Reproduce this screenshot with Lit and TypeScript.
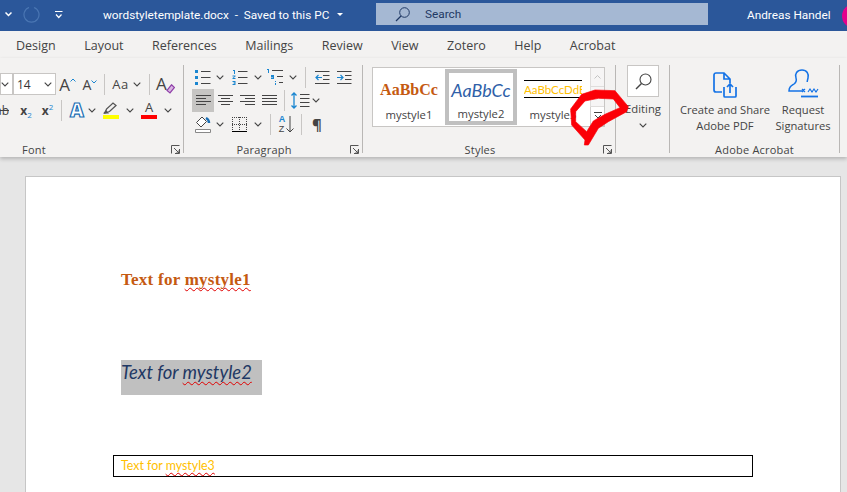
import { LitElement, css, html, svg } from "lit";
import { customElement } from "lit/decorators.js";

const chev = html`<svg class="chev" width="8" height="5" viewBox="0 0 8 5"><path d="M.7.7 4 4 7.3.7" fill="none" stroke="#444" stroke-width="1.1"/></svg>`;
const vline = html`<i class="vline"></i>`;
const launcher = html`<svg width="9" height="9" viewBox="0 0 9 9"><path d="M.5 8.5V.5h8M8.5 4v4.500H4M3 3l5 5M5.200 8h2.800V5.200" fill="none" stroke="#555"/></svg>`;

const lines = (rows: number[][]) =>
  rows.map((r) => svg`<path d="M${r[0]} ${r[2]}H${r[1]}"/>`);

const align = (rows: number[][]) => html`<svg width="15" height="14" viewBox="0 0 15 14" fill="none" stroke="#444">${lines(rows)}</svg>`;

const bullets = html`<svg width="16" height="15" viewBox="0 0 16 15"><path d="M0 0h3v3H0zM0 6h3v3H0zM0 12h3v3H0z" fill="#1a86d0"/><path d="M6 1.500h9.500M6 7.500h9.500M6 13.500h9.500" stroke="#444"/></svg>`;
const numbers = html`<svg width="16" height="15" viewBox="0 0 16 15"><path d="M1 0h2v4H2V1H1zM.5 5.500h3v1l-2 1.500h2v1h-3V8l2-1.500h-2zM.5 11h3v4h-3v-1h2v-.5h-1v-1h1V12h-2z" fill="#1a86d0"/><path d="M6 1.500h9.500M6 7.500h9.500M6 13.500h9.500" stroke="#444"/></svg>`;
const multilevel = html`<svg width="18" height="16" viewBox="0 0 18 16"><path d="M1 0h2v4H2V1H1zM5 6h3v4H5V9h2v-.5H5zM9 12h1v1H9zM9 14h1v2H9z" fill="#1a86d0"/><path d="M6 1.500h11M11 7.500h6M13 13.500h4" stroke="#444"/></svg>`;
const indentOut = html`<svg width="15" height="13" viewBox="0 0 15 13" fill="none"><path d="M0 .5h14.500M8 4.500h6.500M8 8.500h6.500M0 12.500h14.500" stroke="#444"/><path d="M7 6.500H1M3.500 4 1 6.500 3.500 9" stroke="#1a86d0" stroke-width="1.200"/></svg>`;
const indentIn = html`<svg width="15" height="13" viewBox="0 0 15 13" fill="none"><path d="M0 .5h14.500M8 4.500h6.500M8 8.500h6.500M0 12.500h14.500" stroke="#444"/><path d="M0 6.500h6M3.500 4 6 6.500 3.500 9" stroke="#1a86d0" stroke-width="1.200"/></svg>`;
const spacing = html`<svg width="19" height="17" viewBox="0 0 19 17" fill="none"><path d="M3 1v15M.5 3.500 3 1l2.500 2.500M.5 13.500 3 16l2.500-2.500" stroke="#1a86d0" stroke-width="1.300"/><path d="M9 2.500h9.500M9 6.500h9.500M9 10.500h9.500M9 14.500h9.500" stroke="#444"/></svg>`;
const shading = html`<svg width="16" height="17" viewBox="0 0 16 17" fill="none"><path d="M7 1 1.500 6.500 6 11l5.500-5.500z" stroke="#444" fill="#fff"/><path d="M11 2c2 1 3 3 3 5" stroke="#1a6fb5" stroke-width="2.500"/><path d="M.5 13.500h15v3H.5z" fill="#fff" stroke="#888"/></svg>`;
const borders = html`<svg width="15" height="15" viewBox="0 0 15 15" fill="none"><path d="M0 .5h15M0 7.500h15M.5 0v14M7.500 0v14M14.500 0v14" stroke="#444" stroke-dasharray="1 1"/><path d="M0 14.500h15" stroke="#000"/></svg>`;
const erase = html`<svg class="over" width="9" height="10" viewBox="0 0 9 10"><path d="M5.500.8 8.500 3.500 4 9 1 6.500z" fill="#d9b6e2" stroke="#8f3fa8" stroke-width="1.200"/></svg>`;
const pen = html`<svg width="16" height="12" viewBox="0 0 16 12"><path d="M2 11 3.500 7 10 1l3 2.500-6.500 6z" fill="#f3f2f1" stroke="#555" stroke-width="1.300"/><path d="M0 11.500h6L3 8z" fill="#555"/></svg>`;
const lens = html`<svg width="17" height="17" viewBox="0 0 17 17" fill="none" stroke="#444" stroke-width="1.100"><circle cx="10.500" cy="6.500" r="5.500"/><path d="M6.500 10.500 1 16" stroke-width="1.500"/></svg>`;
const pdf = html`<svg width="25" height="26" viewBox="0 0 25 26" fill="none" stroke="#1473e6" stroke-width="1.700"><path d="M9 20H3a2 2 0 0 1-2-2V3a2 2 0 0 1 2-2h8l6 6v4M11 1v6h6"/><path d="M11 15v9a1 1 0 0 0 1 1h10a1 1 0 0 0 1-1v-9M17 21v-9M14 15l3-3 3 3"/></svg>`;
const sign = html`<svg width="32" height="29" viewBox="0 0 32 29" fill="none" stroke="#1473e6" stroke-width="1.500"><path d="M16 22H2c0-4 2-5 5-7 2-1.500 3-3 2-6-1.500-4 1-8 6-8s7 4 6 8c-.4 1.500-.8 3-.8 4"/><path d="M15 20l3 3m0-3-3 3M21 23l2-3 2 3 2-3 2 3 2-3" stroke-width="1.200"/><path d="M14 27.500h17" stroke-width="1.800"/></svg>`;

@customElement("app-root")
export class AppRoot extends LitElement {
  public static styles = css`
    :host {
      display: block;
      position: relative;
      width: 847px;
      height: 492px;
      overflow: hidden;
      background: #e6e6e6;
      font-family: "Open Sans", "Liberation Sans", sans-serif;
      color: #444;
    }

    svg {
      display: block;
      flex: none;
    }

    .titlebar {
      display: flex;
      align-items: center;
      height: 31px;
      background: #2b579a;
      color: #fff;
      font-family: Roboto, "Open Sans", sans-serif;
      font-size: 11.800px;
      overflow: hidden;
    }

    .qat-chev {
      margin: -2px 0 0 5px;
    }

    .redo {
      margin: -2px 0 0 11px;
    }

    .qat {
      margin: -2px 0 0 15px;
    }

    .doc-name {
      flex: none;
      width: 230px;
      margin: -2px 0 0 40px;
      white-space: pre;
    }

    .doc-caret {
      flex: none;
      margin: -2px 0 0 4px;
      border: 3px solid transparent;
      border-top: 3px solid #fff;
      border-bottom: 0;
    }

    .search {
      flex: none;
      display: flex;
      align-items: center;
      width: 332px;
      height: 22px;
      margin: -3px 0 0 33px;
      background: #a5b8d3;
      color: #1f3864;
      box-sizing: border-box;
      padding-left: 19px;
    }

    .search span {
      margin-left: 15px;
    }

    .user {
      flex: none;
      width: 84px;
      margin: -2px 0 0 39px;
      white-space: nowrap;
    }

    .avatar {
      flex: none;
      width: 24px;
      height: 24px;
      margin-left: 11px;
      border-radius: 50%;
      background: #e3008c;
    }

    .tabs {
      display: flex;
      gap: 28.500px;
      height: 27px;
      padding: 6px 0 0 16px;
      box-sizing: border-box;
      background: #f3f2f1;
      font-size: 12.500px;
      line-height: 18px;
      color: #444;
    }

    .ribbon {
      display: flex;
      height: 99px;
      padding-top: 7px;
      box-sizing: border-box;
      background: #f3f2f1;
      box-shadow: 0 2px 4px rgba(0, 0, 0, 0.22);
    }

    .sep {
      flex: none;
      width: 1px;
      height: 88px;
      background: #b9b7b5;
    }

    .group {
      flex: none;
      display: flex;
      flex-direction: column;
      height: 92px;
      box-sizing: border-box;
    }

    .font {
      width: 183px;
      padding-top: 8px;
    }

    .para {
      width: 178px;
    }

    .styles {
      width: 252px;
    }

    .editing {
      width: 53px;
      align-items: center;
    }

    .acrobat {
      width: 169px;
    }

    .label {
      display: flex;
      align-items: center;
      height: 16px;
      margin-top: auto;
      font-size: 11px;
      letter-spacing: 0.2px;
    }

    .label span {
      flex: 1;
      text-align: center;
    }

    .label b {
      flex: none;
      width: 18px;
      font-weight: 400;
    }

    .label b svg {
      margin-left: 6px;
    }

    .font .label span {
      text-align: left;
      padding-left: 22px;
    }

    .row {
      display: grid;
      align-items: center;
      justify-items: center;
    }

    .font .r1 {
      height: 22px;
      grid-template-columns: 13px 43px 23px 22px 6px 39px 6px 26px;
    }

    .font .r2 {
      height: 22px;
      margin-top: 4px;
      grid-template-columns: 15px 22px 21px 7px 24px 6px 31px 8px 30px 7px;
    }

    .para .row {
      padding-left: 8px;
    }

    .para .r1 {
      height: 24px;
      grid-template-columns: 22px 12px 27px 9px 26px 9px 16px 18px 26px;
    }

    .para .r2 {
      height: 23px;
      grid-template-columns: 22px 22px 22px 22px 8px 24px 8px;
    }

    .para .r3 {
      height: 24px;
      grid-template-columns: 22px 12px 27px 9px 16px 17px 12px 20px;
    }

    .vline {
      display: block;
      width: 1px;
      height: 21px;
      background: #c8c6c4;
    }

    .combo {
      display: flex;
      align-items: center;
      justify-content: flex-end;
      height: 22px;
      box-sizing: border-box;
      justify-self: stretch;
      background: #fff;
      border: 1px solid #c8c6c4;
      padding-right: 3px;
      font-size: 12px;
      color: #333;
    }

    .combo span {
      flex: 1;
      padding-left: 3px;
    }

    .glyph {
      display: flex;
      align-items: flex-start;
      line-height: 1;
      color: #444;
      position: relative;
    }

    .up,
    .down {
      width: 6px;
      height: 4px;
      margin-top: 2px;
    }

    .big {
      font-size: 17px;
    }

    .mid {
      font-size: 14px;
      margin-top: 2px;
    }

    .case {
      display: flex;
      align-items: center;
      gap: 4px;
      font-size: 13px;
      letter-spacing: 0.5px;
    }

    .clear {
      font-size: 17px;
      position: relative;
      width: 18px;
      line-height: 20px;
    }

    .over {
      position: absolute;
      right: -1px;
      bottom: 0;
    }

    .strike {
      justify-self: start;
      width: 9px;
      overflow: hidden;
      direction: rtl;
      font-size: 12px;
      text-decoration: line-through;
    }

    .sub {
      font-size: 12px;
      font-weight: 700;
      color: #444;
      white-space: nowrap;
    }

    .sub sub,
    .sub sup {
      font-size: 8px;
      font-weight: 400;
      color: #1a86d0;
      line-height: 0;
    }

    .fx {
      font-size: 19px;
      font-weight: 800;
      line-height: 20px;
      color: #fff;
      -webkit-text-stroke: 1.200px #1a6fb5;
    }

    .stacked {
      display: flex;
      flex-direction: column;
      align-items: center;
      width: 16px;
      line-height: 13px;
      font-size: 13px;
    }

    .stacked i {
      display: block;
      width: 16px;
      height: 4px;
      margin-top: 1px;
    }

    .yellow {
      background: #ffff00;
    }

    .red {
      background: #ff0000;
    }

    .sort {
      display: flex;
      align-items: center;
      gap: 1px;
      font: 9px/10.500px "Liberation Sans", sans-serif;
    }

    .sort div :first-child {
      color: #1a86d0;
      font-weight: 700;
    }

    .sort span {
      display: block;
    }

    .pilcrow {
      font-size: 15px;
      font-weight: 700;
      line-height: 18px;
    }

    .on {
      background: #c6c5c3;
      justify-self: stretch;
      align-self: stretch;
      display: flex;
      align-items: center;
      justify-content: center;
    }

    .gallery {
      display: flex;
      height: 60px;
      width: 233px;
      margin: 2px 0 0 9px;
      box-sizing: border-box;
      background: #fff;
      border: 1px solid #c8c6c4;
    }

    .style {
      flex: none;
      width: 72px;
      height: 56px;
      margin-top: 1px;
      box-sizing: border-box;
      display: flex;
      flex-direction: column;
      align-items: center;
      overflow: hidden;
      font-size: 11.300px;
      border: 3px solid transparent;
    }

    .style.sel {
      border: 4px solid #c0c0c0;
    }

    .sample {
      display: flex;
      align-items: center;
      height: 35px;
      margin-top: 1px;
      white-space: nowrap;
    }

    .sel .sample {
      height: 34px;
      margin-top: 0;
    }

    .s1 {
      font: 700 16px "Liberation Serif", serif;
      color: #c55a11;
    }

    .s2 {
      font: italic 18px Lato, sans-serif;
      color: #2f5fa8;
    }

    .s3 {
      font: 11.500px Lato, sans-serif;
      color: #ffc000;
      height: 17px;
      margin: 8px 0 9px;
      width: 58px;
      justify-content: flex-start;
      overflow: hidden;
      border-top: 1px solid #000;
      border-bottom: 1px solid #000;
    }

    .scroll {
      flex: none;
      display: flex;
      flex-direction: column;
      width: 14px;
      margin-left: 1px;
    }

    .scroll div {
      flex: 1;
      display: flex;
      flex-direction: column;
      align-items: center;
      justify-content: center;
      border-left: 1px solid #d2d0ce;
      border-bottom: 1px solid #d2d0ce;
    }

    .scroll .idle {
      background: #f3f2f1;
      opacity: 0.7;
    }

    .find {
      display: flex;
      align-items: center;
      justify-content: center;
      width: 32px;
      height: 32px;
      box-sizing: border-box;
      background: #fff;
      border: 1px solid #c8c6c4;
      margin-left: 1px;
    }

    .edit-text {
      margin: 4px 0 0 1px;
      font-size: 11.300px;
      line-height: 16px;
    }

    .edit-chev {
      margin-top: 6px;
    }

    .acts {
      display: flex;
      padding-left: 1px;
    }

    .act {
      display: flex;
      flex-direction: column;
      align-items: center;
      font-size: 11.200px;
      line-height: 16px;
      text-align: center;
      white-space: nowrap;
    }

    .act.a {
      width: 108px;
    }

    .act.b {
      width: 46px;
      margin-left: 1px;
    }

    .act .ic {
      display: flex;
      align-items: flex-end;
      justify-content: center;
      height: 33px;
      margin-bottom: 4px;
    }

    .canvas {
      padding: 19px 0 0 25px;
    }

    .page {
      width: 816px;
      height: 400px;
      box-sizing: border-box;
      background: #fff;
      border: 1px solid #c6c6c6;
      padding: 92px 0 0 95px;
    }

    .spell {
      text-decoration: underline wavy #e00000 1px;
      text-decoration-skip-ink: none;
      text-underline-offset: 2px;
    }

    .p1 {
      height: 22px;
      font: 700 17px/22px "Liberation Serif", serif;
      letter-spacing: 0.25px;
      color: #c55a11;
    }

    .p2 {
      width: 141px;
      height: 35px;
      margin-top: 69px;
      background: #c0c0c0;
      font: italic 18.400px/24px Lato, sans-serif;
      color: #1f3864;
      white-space: nowrap;
    }

    .p3 {
      width: 640px;
      height: 22px;
      margin: 60px 0 0 -8px;
      box-sizing: border-box;
      border: 1px solid #000;
      padding: 1px 0 0 7px;
      font: 12.400px/18px Lato, sans-serif;
      color: #ffc000;
    }

    .scribble {
      position: absolute;
      left: 0;
      top: 0;
      pointer-events: none;
    }
  `;

  private renderTitle() {
    return html`<div class="titlebar">
      <svg class="qat-chev" width="7" height="5" viewBox="0 0 7 5"><path d="M.5.5 3.500 3.500 6.500.5" fill="none" stroke="#fff" stroke-width="1.500"/></svg>
      <svg class="redo" width="17" height="17" viewBox="0 0 17 17"><path d="M6 1.500a7.500 7.500 0 1 0 5 0M6 1.500 3 3" fill="none" stroke="#4a76b3" stroke-width="1.200"/></svg>
      <svg class="qat" width="8" height="8" viewBox="0 0 8 8"><path d="M0 .5h7.500M1 3.500 3.750 6.500 6.500 3.500" fill="none" stroke="#fff" stroke-width="1.200"/></svg>
      <span class="doc-name">wordstyletemplate.docx  -  Saved to this PC</span>
      <i class="doc-caret"></i>
      <div class="search">
        <svg width="15" height="15" viewBox="0 0 15 15" fill="none" stroke="#1f3864"><circle cx="9.500" cy="5.500" r="4.800"/><path d="M6 9 1 14" stroke-width="1.300"/></svg>
        <span>Search</span>
      </div>
      <span class="user">Andreas Handel</span>
      <i class="avatar"></i>
    </div>`;
  }

  private renderFont() {
    return html`<div class="group font">
      <div class="row r1">
        <div class="combo">${chev}</div>
        <div class="combo"><span>14</span>${chev}</div>
        <div class="glyph big">A<svg class="up" viewBox="0 0 6 4"><path d="M.5 3.500 3 1l2.500 2.500" fill="none" stroke="#1a86d0"/></svg></div>
        <div class="glyph mid">A<svg class="down" viewBox="0 0 6 4"><path d="M.5.500 3 3 5.500.5" fill="none" stroke="#1a86d0"/></svg></div>
        ${vline}
        <div class="case">Aa ${chev}</div>
        ${vline}
        <div class="clear">A${erase}</div>
      </div>
      <div class="row r2">
        <div class="strike">ab</div>
        <div class="sub">x<sub>2</sub></div>
        <div class="sub">x<sup>2</sup></div>
        ${vline}
        <div class="fx">A</div>
        ${chev}
        <div class="stacked">${pen}<i class="yellow"></i></div>
        ${chev}
        <div class="stacked">A<i class="red"></i></div>
        ${chev}
      </div>
      <div class="label"><span>Font</span><b>${launcher}</b></div>
    </div>`;
  }

  private renderParagraph() {
    return html`<div class="group para">
      <div class="row r1">
        ${bullets}${chev}${numbers}${chev}${multilevel}${chev}${vline}${indentOut}${indentIn}
      </div>
      <div class="row r2">
        <div class="on">${align([[0, 15, 1.5], [0, 10, 4.5], [0, 15, 7.5], [0, 10, 10.5]])}</div>
        ${align([[0, 15, 1.5], [3, 12, 4.5], [0, 15, 7.5], [3, 12, 10.5]])}
        ${align([[0, 15, 1.5], [5, 15, 4.5], [0, 15, 7.5], [5, 15, 10.5]])}
        ${align([[0, 15, 1.5], [0, 15, 4.5], [0, 15, 7.5], [0, 15, 10.5]])}
        ${vline}${spacing}${chev}
      </div>
      <div class="row r3">
        ${shading}${chev}${borders}${chev}${vline}
        <div class="sort">
          <div><span>A</span><span>Z</span></div>
          <svg width="8" height="17" viewBox="0 0 8 17"><path d="M4 0v16M.5 12.500 4 16l3.500-3.500" fill="none" stroke="#444"/></svg>
        </div>
        ${vline}
        <div class="pilcrow">¶</div>
      </div>
      <div class="label"><span>Paragraph</span><b>${launcher}</b></div>
    </div>`;
  }

  private renderStyles() {
    return html`<div class="group styles">
      <div class="gallery">
        <div class="style"><div class="sample s1">AaBbCc</div>mystyle1</div>
        <div class="style sel"><div class="sample s2">AaBbCc</div>mystyle2</div>
        <div class="style"><div class="sample s3">AaBbCcDdE</div>mystyle3</div>
        <div class="scroll">
          <div class="idle"><svg width="7" height="4" viewBox="0 0 7 4"><path d="M.5 3.500 3.500.5l3 3" fill="none" stroke="#aaa"/></svg></div>
          <div class="idle"></div>
          <div>
            <svg width="8" height="7" viewBox="0 0 8 7"><path d="M0 .5h8M1 3l3 3 3-3" fill="none" stroke="#444"/></svg>
          </div>
        </div>
      </div>
      <div class="label"><span>Styles</span><b>${launcher}</b></div>
    </div>`;
  }

  private renderEditing() {
    return html`<div class="group editing">
      <div class="find">${lens}</div>
      <div class="edit-text">Editing</div>
      <div class="edit-chev">${chev}</div>
    </div>`;
  }

  private renderAcrobat() {
    return html`<div class="group acrobat">
      <div class="acts">
        <div class="act a"><div class="ic">${pdf}</div>Create and Share<br />Adobe PDF</div>
        <div class="act b"><div class="ic">${sign}</div>Request<br />Signatures</div>
      </div>
      <div class="label"><span>Adobe Acrobat</span></div>
    </div>`;
  }

  public render() {
    return html`${this.renderTitle()}
      <div class="tabs">
        <span>Design</span><span>Layout</span><span>References</span><span>Mailings</span>
        <span>Review</span><span>View</span><span>Zotero</span><span>Help</span><span>Acrobat</span>
      </div>
      <div class="ribbon">
        ${this.renderFont()}<i class="sep"></i>${this.renderParagraph()}<i class="sep"></i>
        ${this.renderStyles()}<i class="sep"></i>${this.renderEditing()}<i class="sep"></i>
        ${this.renderAcrobat()}<i class="sep"></i>
      </div>
      <div class="canvas">
        <div class="page">
          <div class="p1">Text for <span class="spell">mystyle1</span></div>
          <div class="p2">Text for <span class="spell">mystyle2</span></div>
          <div class="p3">Text for <span class="spell">mystyle3</span></div>
        </div>
      </div>
      <svg class="scribble" width="847" height="492" viewBox="0 0 847 492">
        <g transform="translate(565 85) scale(.3333)">
          <path d="M17 72 50 28 90 15 150 17 190 65 185 80 130 110 100 130 70 180 58 180 60 165 20 120ZM32 80 32 110 65 140 85 108 120 88 165 68 145 42 100 40 60 48Z" fill="#fb0007" fill-rule="evenodd" stroke="#fb0007" stroke-width="2" stroke-linejoin="round"/>
        </g>
      </svg>`;
  }
}
